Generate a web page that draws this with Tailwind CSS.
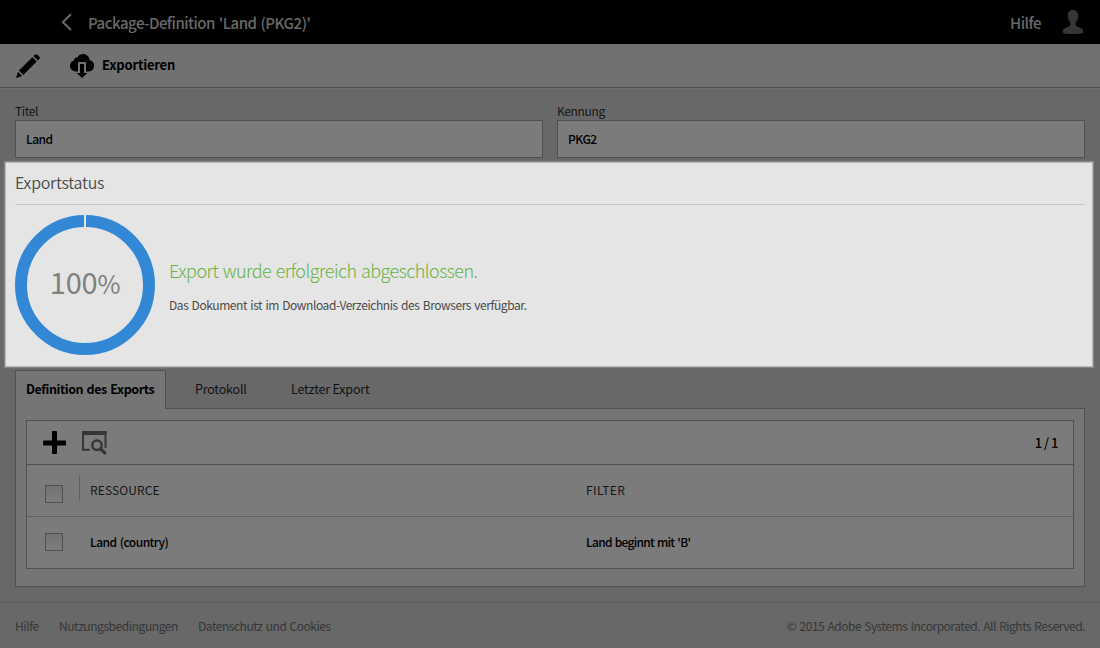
<!DOCTYPE html>
<html lang="de">
<head>
<meta charset="utf-8">
<title>Package-Definition</title>
<script src="https://cdn.jsdelivr.net/npm/@tailwindcss/browser@4"></script>
</head>
<body class="flex h-[648px] w-[1100px] flex-col overflow-hidden bg-[#686868] font-['Noto_Sans_CJK_SC','Noto_Sans',sans-serif] text-[12px] leading-4 whitespace-nowrap text-black">
<header class="flex h-11 shrink-0 items-center bg-black pl-[61px] pr-[16px] text-[15px] font-medium tracking-[-0.5px] [word-spacing:1px] text-[#696969]">
  <svg class="h-5 w-3" viewBox="0 0 12 20" fill="none" stroke="#6b6b6b" stroke-width="1.9"><path d="M10 2.300 1.800 10.200 10 18"/></svg>
  <h1 class="ml-[15px] pt-px"><span>Package-Definition 'Land (PKG2)'</span></h1>
  <span class="ml-auto pt-px">Hilfe</span>
  <svg class="ml-[21px] h-6 w-[22px]" viewBox="0 0 22 24" fill="#363636"><path d="M11 0C7.600 0 5.700 2.300 5.700 6c0 2.600 1.200 4.300 2 5.700.8 1.300.9 3.300-.2 4.300C5.500 17.600.9 18 .9 20.500V23c3 1.300 17.200 1.300 20.200 0v-2.500c0-2.500-4.600-2.900-6.600-4.500-1.100-1-1-3-.2-4.300.8-1.400 2-3.100 2-5.700C16.300 2.300 14.400 0 11 0Z"/></svg>
</header>
<div class="flex h-11 shrink-0 items-center border-b border-[#505050] bg-[#717171] pl-4 text-[13px] font-bold tracking-[-0.2px]">
  <svg class="h-6 w-6" viewBox="0 0 24 24"><path d="M0 24 2 17.800 6.200 22ZM3 16.600 16.400 3.200 20.700 7.500 7.300 20.900ZM17.500 2.100 18.800.8Q20.200-.5 21.500.8L23.200 2.500Q24.500 3.800 23.200 5.100L21.800 6.400Z"/></svg>
  <svg class="ml-[30px] h-6 w-6" viewBox="0 0 24 24"><path d="M6 17.400C2.500 17.400 0 15 0 11.800 0 9.200 1.500 7 4 6.400 4.100 4.300 5.700 3 7.600 3.200 8.700 1 10.800 0 13 0c3.600 0 6.300 2.600 6.500 6 2.700.5 4.700 2.800 4.700 5.600 0 3.400-2.500 5.800-6 5.800h-2.200V8H8v9.400ZM10 10h4v9h3.500L12 24 6.700 19H10Z"/></svg>
  <span class="ml-2 pb-[2px]">Exportieren</span>
</div>
<div class="h-px shrink-0 bg-[#6f6f6f]"></div>
<main class="flex h-[513px] shrink-0 flex-col">
  <div class="grid grid-cols-2 gap-[14px] px-[15px] pt-[14px]">
    <label class="flex flex-col text-[#161616]"><span class="pb-px tracking-[-0.35px]">Titel</span>
      <span class="flex h-[38px] items-center border border-[#505050] bg-[#7b7b7b] px-[10px] font-medium tracking-[-0.5px] text-black"><span>Land</span></span></label>
    <label class="flex flex-col text-[#161616]"><span class="pb-px tracking-[-0.35px]">Kennung</span>
      <span class="flex h-[38px] items-center border border-[#505050] bg-[#7b7b7b] px-[10px] font-medium tracking-[-0.5px] text-black"><span>PKG2</span></span></label>
  </div>
  <section class="mt-[4px] ml-[5px] h-[205px] w-[1088px] shrink-0 border border-[#b8b8b8] bg-[#e5e5e5] px-[9px] shadow-[0_0_1px_1px_#858585]">
    <h2 class="h-[42px] w-[1070px] border-b border-[#c9c9c9] pt-[9px] text-[16px] leading-5 font-[350] tracking-[-0.24px] text-[#4b4b4b]"><span>Exportstatus</span></h2>
    <div class="flex pt-[10px]">
      <div class="relative size-[140px]">
        <svg class="size-full" viewBox="0 0 140 140"><circle cx="70" cy="70" r="64" fill="none" stroke="#3288d4" stroke-width="12"/><path d="M69 0h2v13h-2z" fill="#e5e5e5"/></svg>
        <div class="absolute inset-0 flex items-center justify-center pb-[7px] text-[#7f7f7f]"><span class="text-[29px] tracking-[-0.2px]">100<span class="text-[25px]">%</span></span></div>
      </div>
      <div class="ml-[14px] pt-[43px]">
        <p class="text-[18px] leading-6 font-light tracking-[-0.54px] [word-spacing:1px] text-[#69b343]"><span>Export wurde erfolgreich abgeschlossen.</span></p>
        <p class="mt-[15px] tracking-[-0.43px] [word-spacing:1px] text-[#4b4b4b]"><span>Das Dokument ist im Download-Verzeichnis des Browsers verfügbar.</span></p>
      </div>
    </div>
  </section>
  <div class="mt-[3px] ml-[15px] flex h-[38px] shrink-0 text-[12.500px] tracking-[-0.2px] text-[#111]">
    <div class="z-10 flex h-[39px] w-[151px] items-center border border-b-0 border-[#505050] bg-[#757575] px-[10px] pb-[2px] font-bold tracking-[-0.41px] [word-spacing:1px] text-black"><span>Definition des Exports</span></div>
    <div class="ml-[29px] flex w-[51px] items-center"><span>Protokoll</span></div>
    <div class="ml-[45px] flex items-center"><span>Letzter Export</span></div>
  </div>
  <section class="mx-[15px] h-[179px] shrink-0 border border-[#505050] bg-[#757575] px-[10px] pt-[11px]">
    <div class="h-[149px] border border-[#505050] bg-[#7b7b7b]">
      <div class="flex h-[44px] items-center border-b border-[#505050] pr-[15px] pl-[15px]">
        <svg class="size-6" viewBox="0 0 24 24"><path d="M11 0h3q1 0 1 1v8.500h8q1 0 1 1v3q0 1-1 1h-8V22q0 1-1 1h-3q-1 0-1-1v-7.500H2q-1 0-1-1v-3q0-1 1-1h8V1q0-1 1-1Z"/></svg>
        <svg class="ml-[15px] h-6 w-[26px]" viewBox="0 0 26 24" fill="none" stroke="#363636"><path d="M9 18.800H2V1.500h22.500v15.300" stroke-width="2"/><path d="M1 0h24.500v4H1z" fill="#363636" stroke="none"/><circle cx="16" cy="14.200" r="4.700" stroke-width="2.500"/><path d="m19.300 17.800 5.400 5" stroke-width="3.300"/></svg>
        <span class="ml-auto text-[13px] font-medium tracking-[-0.5px]">1 / 1</span>
      </div>
      <div class="flex h-[52px] items-center border-b border-[#616161] text-[#161616]">
        <div class="mt-[7px] ml-[18px] size-[18px] border border-[#505050] bg-linear-to-b from-[#727272] to-[#7e7e7e]"></div>
        <div class="mb-[5px] ml-[16px] h-[26px] w-px bg-[#606060]"></div>
        <div class="ml-[10px] w-[496px] pb-[2px] tracking-[0.12px]"><span>RESSOURCE</span></div>
        <div class="pb-[2px] tracking-[0.4px]"><span>FILTER</span></div>
      </div>
      <div class="flex h-[51px] items-center pb-[2px] font-medium">
        <div class="ml-[18px] size-[18px] border border-[#505050] bg-linear-to-b from-[#727272] to-[#7e7e7e]"></div>
        <div class="ml-[27px] w-[496px] tracking-[-0.52px] [word-spacing:1px]"><span>Land (country)</span></div>
        <div class="tracking-[-0.72px] [word-spacing:1px]"><span>Land beginnt mit 'B'</span></div>
      </div>
    </div>
  </section>
</main>
<footer class="flex h-[46px] shrink-0 items-center border-t border-[#5c5c5c] px-[15px] tracking-[-0.43px] text-[#363636] [word-spacing:1px]">
  <span class="w-6">Hilfe</span><span class="ml-5 w-[119px]">Nutzungsbedingungen</span><span class="ml-5 tracking-[-0.47px]">Datenschutz und Cookies</span>
  <span class="ml-auto tracking-[-0.49px]">© 2015 Adobe Systems Incorporated. All Rights Reserved.</span>
</footer>
</body>
</html>
